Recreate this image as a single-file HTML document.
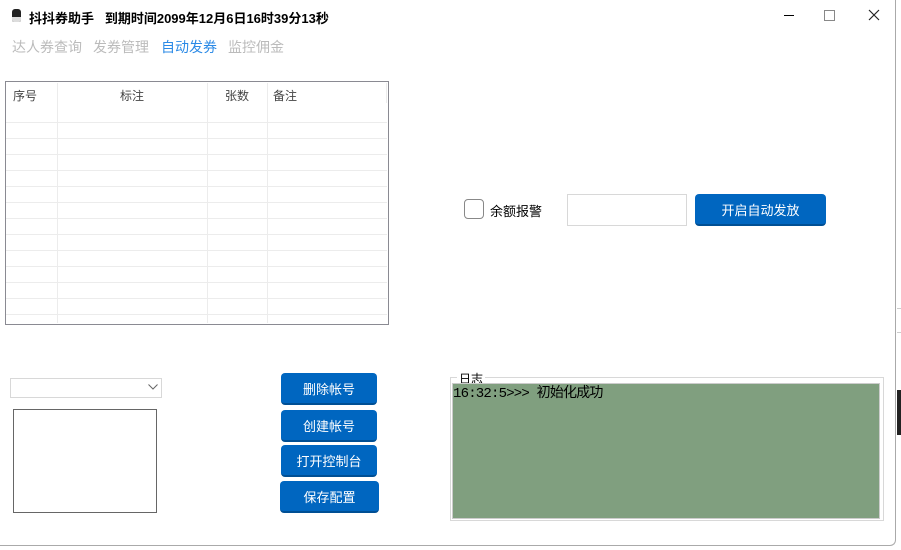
<!DOCTYPE html><html><head><meta charset="utf-8"><style>
body{margin:0;width:901px;height:550px;background:#fff;position:relative;overflow:hidden;font-family:"Liberation Sans","Noto Sans CJK SC",sans-serif;}
.a{position:absolute;}
.win{left:0;top:0;width:895px;height:545px;border-right:1px solid #aaa;border-bottom:1px solid #aaa;border-radius:0 0 6px 0;}
.btn{position:absolute;background:#0066c0;color:#fff;font-size:13px;border-radius:4px;border-bottom:2px solid #004f94;display:flex;align-items:center;justify-content:center;box-sizing:border-box;}
.hl{position:absolute;left:6px;width:381px;height:1px;background:#ececec;}
.vl{position:absolute;top:83px;width:1px;height:240px;background:#ececec;}
.th{position:absolute;top:87px;font-size:12px;color:#444;}
.m{position:absolute;top:37px;font-size:14px;color:#bbb;}
</style></head><body>
<div class="a win"></div>
<div class="a" style="left:12px;top:9px;width:9px;height:13px;background:#222;border-radius:3px 3px 2px 2px;"></div>
<div class="a" style="left:12px;top:17px;width:9px;height:5px;background:#ddd;border-radius:0 0 2px 2px;"></div>
<div class="a" style="left:29px;top:8px;font-size:13px;font-weight:bold;color:#000;">抖抖券助手&nbsp;&nbsp;&nbsp;到期时间2099年12月6日16时39分13秒</div>
<div class="a" style="left:784px;top:15px;width:10px;height:1px;background:#000;"></div>
<div class="a" style="left:824px;top:10px;width:9px;height:9px;border:1px solid #888;"></div>
<svg class="a" style="left:868px;top:9px" width="12" height="12"><path d="M1 1L11 11M11 1L1 11" stroke="#222" stroke-width="1.2"/></svg>
<div class="m" style="left:12px;width:70px;letter-spacing:0">达人券查询</div>
<div class="m" style="left:93px">发券管理</div>
<div class="m" style="left:161px;color:#2b8ae6">自动发券</div>
<div class="m" style="left:228px">监控佣金</div>
<div class="a" style="left:5px;top:81px;width:382px;height:242px;border:1px solid #8a8a92;"></div>
<div class="vl" style="left:57px"></div><div class="vl" style="left:207px"></div><div class="vl" style="left:267px"></div><div class="vl" style="left:386px;top:83px;height:20px"></div>
<div class="hl" style="top:122px"></div><div class="hl" style="top:138px"></div><div class="hl" style="top:154px"></div><div class="hl" style="top:170px"></div><div class="hl" style="top:186px"></div><div class="hl" style="top:202px"></div><div class="hl" style="top:218px"></div><div class="hl" style="top:234px"></div><div class="hl" style="top:250px"></div><div class="hl" style="top:266px"></div><div class="hl" style="top:282px"></div><div class="hl" style="top:298px"></div><div class="hl" style="top:314px"></div>
<div class="th" style="left:13px">序号</div><div class="th" style="left:120px">标注</div><div class="th" style="left:225px">张数</div><div class="th" style="left:273px">备注</div>
<div class="a" style="left:464px;top:199px;width:18px;height:18px;border:1px solid #888;border-radius:4px;"></div>
<div class="a" style="left:490px;top:201px;font-size:13px;color:#000;">余额报警</div>
<div class="a" style="left:567px;top:194px;width:118px;height:30px;border:1px solid #d8d8d8;"></div>
<div class="btn" style="left:695px;top:194px;width:131px;height:32px;">开启自动发放</div>
<div class="a" style="left:10px;top:378px;width:150px;height:18px;border:1px solid #d8d8d8;"></div>
<svg class="a" style="left:148px;top:384px" width="10" height="6"><path d="M0.5 0.5L5 5L9.5 0.5" stroke="#666" fill="none"/></svg>
<div class="a" style="left:13px;top:409px;width:142px;height:102px;border:1px solid #666;"></div>
<div class="btn" style="left:281px;top:373px;width:96px;height:32px;">删除帐号</div>
<div class="btn" style="left:281px;top:410px;width:96px;height:32px;">创建帐号</div>
<div class="btn" style="left:281px;top:445px;width:96px;height:32px;">打开控制台</div>
<div class="btn" style="left:280px;top:481px;width:99px;height:32px;">保存配置</div>
<div class="a" style="left:450px;top:377px;width:432px;height:142px;border:1px solid #d8d8d8;"></div>
<div class="a" style="left:457px;top:370px;font-size:12px;background:#fff;padding:0 2px;color:#000;">日志</div>
<div class="a" style="left:452px;top:383px;width:426px;height:134px;background:#809f7f;border:1px solid #ccc;"></div>
<div class="a" style="left:453px;top:382px;font-size:14px;color:#000;font-family:'Liberation Mono','WenQuanYi Zen Hei',monospace;letter-spacing:-0.8px;">16:32:5&gt;&gt;&gt; 初始化成功</div>
<div class="a" style="left:897px;top:390px;width:4px;height:45px;background:#222;"></div>
<div class="a" style="left:897px;top:308px;width:4px;height:1px;background:#ccc;"></div>
<div class="a" style="left:897px;top:332px;width:4px;height:1px;background:#ccc;"></div>
</body></html>
